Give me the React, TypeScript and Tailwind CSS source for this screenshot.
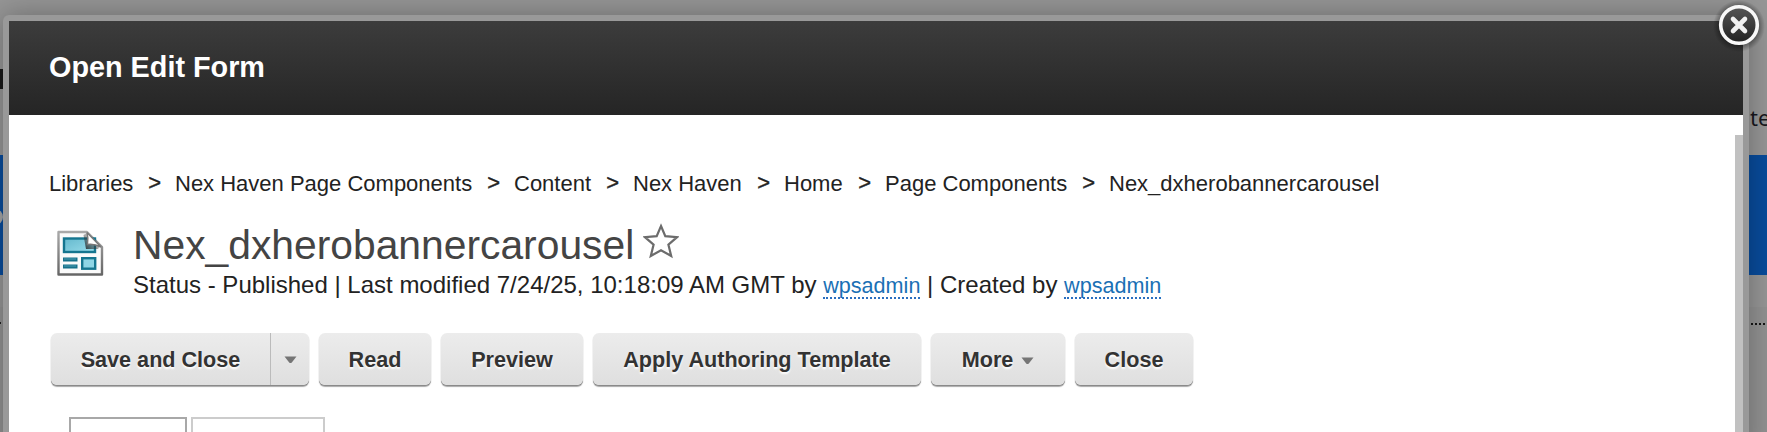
import React from "react";

const crumbs = [
  { label: "Libraries", width: "w-[126px]" },
  { label: "Nex Haven Page Components", width: "w-[339px]" },
  { label: "Content", width: "w-[119px]" },
  { label: "Nex Haven", width: "w-[151px]" },
  { label: "Home", width: "w-[101px]" },
  { label: "Page Components", width: "w-[224px]" },
];

const buttonStyle =
  "flex h-[52px] items-center justify-center rounded-[6px] bg-linear-to-b from-[#ececec] to-[#dfdfdf] pt-[3px] text-[21.6px] font-bold text-[#333] [text-shadow:0_2px_2px_#fff] shadow-[0_1px_0_#8a8a8a,0_2px_1px_#aaa,0_1px_1px_#ccc]";

function Caret() {
  return (
    <svg width="13" height="8" viewBox="0 0 13 8">
      <path d="M0.5 0.5h12L7.8 6.4q-1.3 1-2.6 0z" fill="#757575" />
    </svg>
  );
}

function PageIcon() {
  return (
    <svg width="48" height="48" viewBox="0 0 48 48" className="block">
      <defs>
        <linearGradient id="cyan" x1="0" y1="0" x2="1" y2="1">
          <stop offset="0" stopColor="#65b9ce" />
          <stop offset="1" stopColor="#98dcea" />
        </linearGradient>
        <linearGradient id="edge" x1="0" y1="0" x2="0" y2="1">
          <stop offset="0" stopColor="#a9a9a9" />
          <stop offset="1" stopColor="#666" />
        </linearGradient>
        <linearGradient id="fold" x1="0" y1="1" x2="0.7" y2="0.3">
          <stop offset="0" stopColor="#222" stopOpacity=".9" />
          <stop offset="1" stopColor="#444" stopOpacity=".2" />
        </linearGradient>
      </defs>
      <path d="M2.5 2H31L46 17V44.5H2.5Z" fill="#fafafa" stroke="url(#edge)" strokeWidth="2.4" strokeLinejoin="round" />
      <rect x="8" y="8.5" width="31" height="13.5" fill="url(#cyan)" stroke="#15758f" strokeWidth="2.4" />
      <path d="M27.5 5L31 3L44 16L42 19H30z" fill="url(#fold)" />
      <path d="M31 2.5Q32.5 8 31.5 14.5Q38 13.5 45 17Z" fill="#fff" stroke="#777" strokeWidth="1.4" />
      <path d="M7 29.5h14.5M7 36.5h14.5" stroke="#17718a" strokeWidth="4" />
      <path d="M8 29h12M8 36h12" stroke="#5da9bd" strokeWidth="0.8" />
      <rect x="26.2" y="28.2" width="13" height="10.5" fill="#8ed5e5" stroke="#15758f" strokeWidth="2.4" />
    </svg>
  );
}

export default function App() {
  return (
    <div className="relative h-[432px] w-[1767px] overflow-hidden bg-[#969696] font-['Liberation_Sans',Arial,sans-serif] text-[#222]">
      <div className="absolute inset-x-0 top-[155px] h-[120px] bg-[#084b9b]" />
      <div className="absolute inset-x-0 top-[307px] bottom-0 bg-[#929292]" />
      <div className="absolute top-[69px] left-0 h-5 w-[3px] bg-[#191919]" />
      <div className="absolute top-[209px] left-[-13px] size-4 rounded-full bg-[#a6a6a6]" />
      <div className="absolute top-[322px] left-0 h-[2px] w-px bg-[#222]" />
      <div className="absolute top-[102px] left-[1750px] font-['Noto_Sans',sans-serif] text-[22px] leading-[30px] text-[#17171d]">te</div>
      <div className="absolute top-[323px] left-[1751px] flex gap-[2px]">
        {[0, 1, 2, 3].map((dot) => (
          <span key={dot} className="size-[2px] bg-[#151515]" />
        ))}
      </div>

      <div className="absolute top-[15px] left-[3px] h-[440px] w-[1746px] rounded-t-[6px] bg-[#999] px-[6px] pt-[6px] shadow-[0_0_30px_rgba(0,0,0,.3)]">
        <div className="flex h-full flex-col bg-white">
          <header className="flex h-[94px] shrink-0 items-center bg-linear-to-b from-[#3c3c3c] to-[#252525] pb-[2px] pl-10">
            <h1 className="text-[28.8px] leading-8 font-bold text-white">Open Edit Form</h1>
          </header>
          <div className="flex min-h-0 flex-1">
            <main className="flex-1 pl-10">
              <nav className="mt-[56px] flex h-[26px] items-center text-[22px] leading-[26px] whitespace-nowrap">
                {crumbs.map((crumb) => (
                  <span key={crumb.label} className={`flex shrink-0 justify-between ${crumb.width}`}>
                    <span>{crumb.label}</span>
                    <span className="relative -top-px mr-[14px] [-webkit-text-stroke:0.4px_#222]">&gt;</span>
                  </span>
                ))}
                <span>Nex_dxherobannercarousel</span>
              </nav>

              <section className="mt-[25px] flex h-[79px]">
                <div className="w-[84px] pt-2 pl-[7px]">
                  <PageIcon />
                </div>
                <div>
                  <div className="flex h-[49px] items-center">
                    <h2 className="-mt-[3px] text-[40.8px] leading-[46px] text-[#444]">Nex_dxherobannercarousel</h2>
                    <svg width="36" height="36" viewBox="0 0 36 36" className="-mt-[11px] ml-[9px] shrink-0">
                      <path
                        d="M18 3L22.3 13.2L34 14.2L25.4 21.6L28.2 33L18 27.2L7.8 33L10.6 21.6L2 14.2L13.7 13.2Z"
                        fill="none"
                        stroke="#6c6c6c"
                        strokeWidth="2.2"
                      />
                    </svg>
                  </div>
                  <p className="flex items-baseline text-[24px] leading-[28px] whitespace-pre">
                    <span>Status - Published | Last modified 7/24/25, 10:18:09 AM GMT by </span>
                    <a className="border-b-2 border-dotted border-[#2a6fc0] text-[21.6px] leading-[22px] text-[#1a70b5]">wpsadmin</a>
                    <span> | Created by </span>
                    <a className="border-b-2 border-dotted border-[#2a6fc0] text-[21.6px] leading-[22px] text-[#1a70b5]">wpsadmin</a>
                  </p>
                </div>
              </section>

              <div className="mt-[32px] ml-[2px] flex gap-[10px]">
                <div className={`${buttonStyle} w-[258px]`}>
                  <span className="flex h-full w-[219px] items-center justify-center">Save and Close</span>
                  <span className="-mt-[3px] flex h-[52px] flex-1 items-center justify-center border-l border-[#bbb] pt-[2px]">
                    <Caret />
                  </span>
                </div>
                <button className={`${buttonStyle} w-[112px]`}>Read</button>
                <button className={`${buttonStyle} w-[142px]`}>Preview</button>
                <button className={`${buttonStyle} w-[328px]`}>Apply Authoring Template</button>
                <button className={`${buttonStyle} w-[134px] gap-2`}>
                  More <Caret />
                </button>
                <button className={`${buttonStyle} w-[118px]`}>Close</button>
              </div>

              <div className="mt-[32px] ml-5 flex gap-1">
                <div className="h-10 w-[118px] border-2 border-[#a8a8a8]" />
                <div className="h-10 w-[134px] border-2 border-[#ccc]" />
              </div>
            </main>
            <div className="mt-5 w-2 bg-[#c1c1c1]" />
          </div>
        </div>
      </div>

      <svg className="absolute top-0 left-[1713px]" width="52" height="52" viewBox="0 0 52 52">
        <defs>
          <radialGradient id="halo">
            <stop offset=".72" stopColor="#000" stopOpacity=".4" />
            <stop offset="1" stopColor="#000" stopOpacity="0" />
          </radialGradient>
          <linearGradient id="disc" x1="0" y1="0" x2="0" y2="1">
            <stop offset="0" stopColor="#555" />
            <stop offset="1" stopColor="#222" />
          </linearGradient>
        </defs>
        <circle cx="26" cy="26" r="26" fill="url(#halo)" />
        <circle cx="26" cy="25" r="18.3" fill="url(#disc)" stroke="#f8f8f8" strokeWidth="3.6" />
        <path d="M20 19L32 31M32 19L20 31" stroke="#f0f0f0" strokeWidth="4.6" strokeLinecap="round" />
      </svg>
    </div>
  );
}
